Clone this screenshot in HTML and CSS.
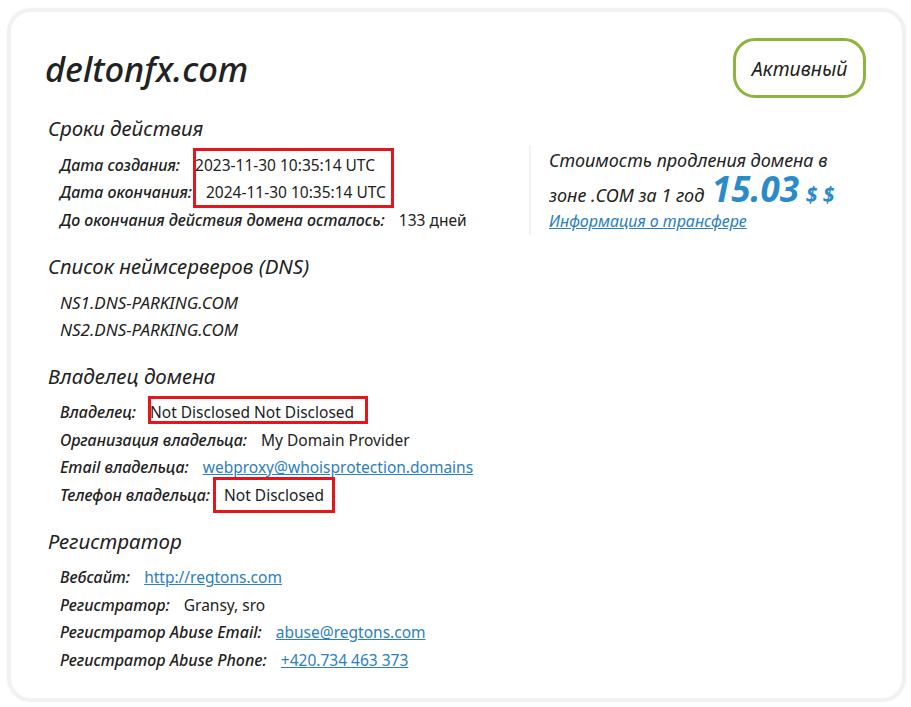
FILE: index.html
```html
<!DOCTYPE html>
<html lang="ru">
    <head>
        <meta charset="UTF-8">
        <meta name="viewport" content="width=device-width, initial-scale=1.0">
        <title>deltonfx.com - Whois</title>
        <link rel="stylesheet" href="styles.css">
    </head>
    <body>
        <div class="card">
            <div class="head">
                <h1 class="domain">deltonfx.com</h1>
                <span class="status">Активный</span>
            </div>

            <div class="top">
                <div class="block dates">
                    <h2>Сроки действия</h2>
                    <div class="row"><span class="label">Дата создания:</span><span class="value first">2023-11-30 10:35:14 UTC</span></div>
                    <div class="row"><span class="label">Дата окончания:</span><span class="value">2024-11-30 10:35:14 UTC</span></div>
                    <div class="row"><span class="label">До окончания действия домена осталось:</span><span class="value">133 дней</span></div>
                    <span class="mark mark-dates"></span>
                </div>
                <div class="price">
                    <p class="price-text">Стоимость продления домена в</p>
                    <p class="price-text">зоне .COM за 1 год <span class="amount">15.03</span> <span class="currency">$ $</span></p>
                    <a href="#" class="transfer">Информация о трансфере</a>
                </div>
            </div>

            <div class="block">
                <h2>Список неймсерверов (DNS)</h2>
                <div class="row"><span class="ns">NS1.DNS-PARKING.COM</span></div>
                <div class="row"><span class="ns">NS2.DNS-PARKING.COM</span></div>
            </div>

            <div class="block owner">
                <h2>Владелец домена</h2>
                <div class="row"><span class="label">Владелец:</span><span class="value">Not Disclosed Not Disclosed</span></div>
                <div class="row"><span class="label">Организация владельца:</span><span class="value">My Domain Provider</span></div>
                <div class="row"><span class="label">Email владельца:</span><a href="#" class="value link">webproxy@whoisprotection.domains</a></div>
                <div class="row"><span class="label">Телефон владельца:</span><span class="value">Not Disclosed</span></div>
                <span class="mark mark-owner"></span>
                <span class="mark mark-phone"></span>
            </div>

            <div class="block last">
                <h2>Регистратор</h2>
                <div class="row"><span class="label">Вебсайт:</span><a href="#" class="value link">http://regtons.com</a></div>
                <div class="row"><span class="label">Регистратор:</span><span class="value">Gransy, sro</span></div>
                <div class="row"><span class="label">Регистратор Abuse Email:</span><a href="#" class="value link">abuse@regtons.com</a></div>
                <div class="row"><span class="label">Регистратор Abuse Phone:</span><a href="#" class="value link">+420.734 463 373</a></div>
            </div>
        </div>
    </body>
</html>
```

FILE: styles.css
```css
body {
    margin: 0;
    padding: 0;
    background-color: #fff;
    font-family: "Noto Sans", Arial, sans-serif;
    color: #222;
}

.card {
    margin: 8px 5px 4px 7px;
    border: 4px solid #f1f1f1;
    border-radius: 24px;
    padding: 26px 36px 24px 37px;
    box-shadow: 0 0 3px rgba(0, 0, 0, 0.04);
}

.head {
    display: flex;
    justify-content: space-between;
    align-items: center;
    height: 60px;
}

.domain {
    margin: 0 0 0 -3px;
    font-size: 34.5px;
    font-style: italic;
    font-weight: 500;
    color: #222;
}

.status {
    display: flex;
    align-items: center;
    justify-content: center;
    box-sizing: border-box;
    width: 133px;
    height: 60px;
    border: 3px solid #8db53c;
    border-radius: 22px;
    font-size: 19.5px;
    font-style: italic;
}

.top {
    display: flex;
    margin-top: 16px;
}

.dates {
    width: 481px;
}

.block {
    position: relative;
    margin-bottom: 18px;
}

.block.last {
    margin-bottom: 0;
}

h2 {
    margin: 0 0 9px;
    font-size: 20.5px;
    line-height: 28px;
    font-style: italic;
    font-weight: 400;
}

.row {
    display: flex;
    height: 27.5px;
    align-items: center;
    padding-left: 12px;
    font-size: 16px;
    white-space: nowrap;
}

.label {
    font-style: italic;
    font-weight: 500;
}

.value {
    margin-left: 14px;
    font-size: 15.5px;
}

.value.first {
    margin-left: 15px;
}

.ns {
    font-size: 17px;
    font-style: italic;
}

.link {
    color: #2b80c0;
}

.price {
    margin-top: 31px;
    height: 90px;
    border-left: 2px solid #f2f2f2;
    padding-left: 18px;
}

.price-text {
    margin: 0;
    font-size: 18px;
    font-style: italic;
    line-height: 30px;
}

.amount {
    display: inline-block;
    height: 30px;
    margin-left: 3px;
    font-size: 35px;
    font-weight: 700;
    color: #2a8bcb;
    line-height: 27px;
}

.currency {
    margin-left: 2px;
    font-size: 21px;
    font-weight: 700;
    color: #2a8bcb;
}

.transfer {
    font-size: 16px;
    font-style: italic;
    color: #2b80c0;
}

/* red annotation frames */
.mark {
    position: absolute;
    border: 3px solid #e4161b;
}

.mark-dates {
    left: 145px;
    top: 34px;
    width: 195px;
    height: 54px;
}

.mark-owner {
    left: 100px;
    top: 34px;
    width: 214px;
    height: 22px;
}

.mark-phone {
    left: 165px;
    top: 115px;
    width: 116px;
    height: 30px;
}
```
